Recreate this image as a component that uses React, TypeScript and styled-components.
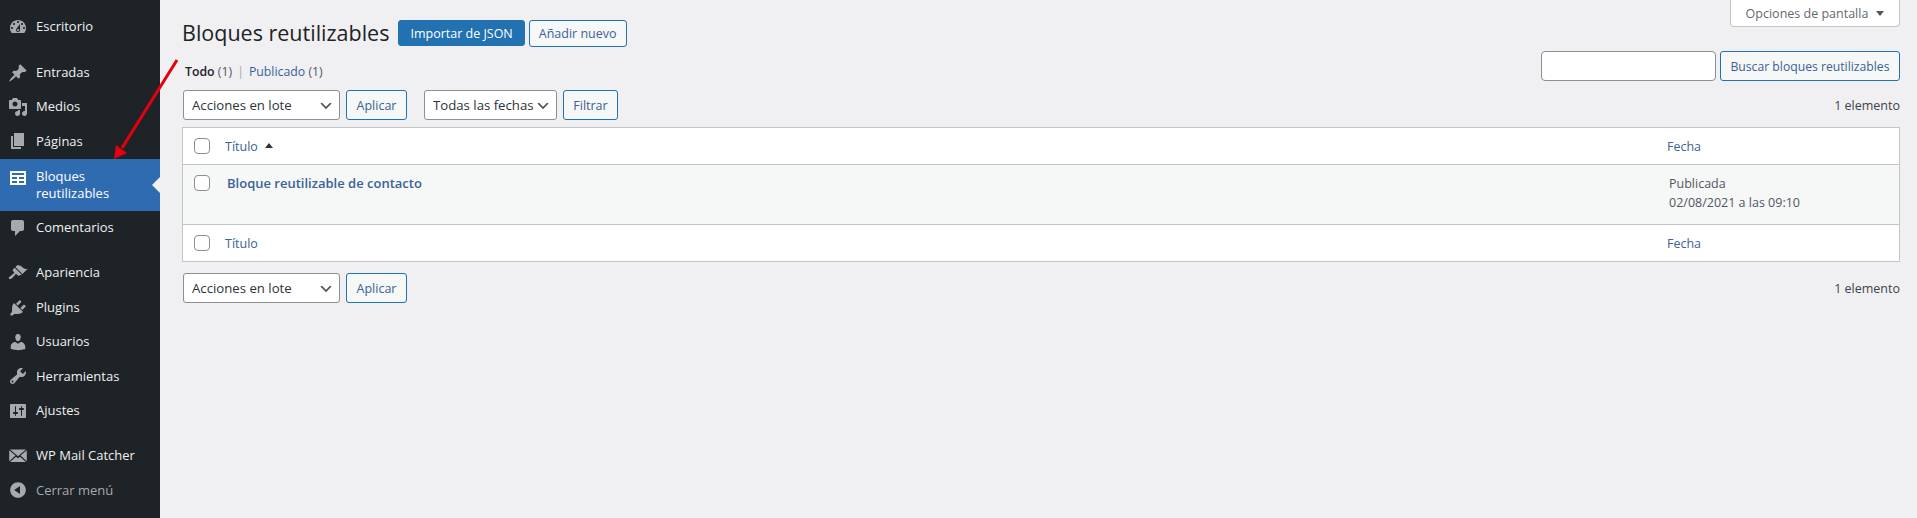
import React, { FC } from "react";
import styled, { createGlobalStyle } from "styled-components";

const GlobalStyle = createGlobalStyle`
  html, body {
    margin: 0;
    padding: 0;
    height: 100%;
    background: #f0f0f2;
    font-family: "Open Sans", "Noto Sans", sans-serif;
    font-size: 12.5px;
    color: #3c434a;
  }
  #root {
    height: 100%;
  }
`;

const LINK = "#3a6298";

const Shell = styled.div`
  position: relative;
  display: flex;
  width: 100%;
  height: 518px;
  overflow: hidden;
`;

const Sidebar = styled.nav`
  flex: 0 0 160px;
  background: #1d2327;
  padding-top: 10px;
  box-sizing: border-box;
`;

const MenuGroup = styled.ul`
  list-style: none;
  margin: 0 0 11px;
  padding: 0;
`;

const MenuItem = styled.li<{ $active?: boolean; $muted?: boolean }>`
  position: relative;
  display: flex;
  align-items: ${(p) => (p.$active ? "flex-start" : "center")};
  min-height: 34.4px;
  box-sizing: border-box;
  padding: ${(p) => (p.$active ? "9px 4px 8px 0" : "0 4px 0 0")};
  background: ${(p) => (p.$active ? "#2f6bb0" : "transparent")};
  color: ${(p) => (p.$active ? "#fff" : p.$muted ? "#a7aaad" : "#f0f0f1")};
  font-size: 13px;
  line-height: 17.5px;

  ${(p) =>
    p.$active &&
    `
    &::after {
      content: "";
      position: absolute;
      right: 0;
      top: 18px;
      border: 8px solid transparent;
      border-left-width: 0;
      border-right-color: #f0f0f2;
    }
  `}
`;

const MenuIcon = styled.svg<{ $active?: boolean }>`
  flex: 0 0 20px;
  width: 20px;
  height: 20px;
  margin: 0 8px 0 8px;
  fill: ${(p) => (p.$active ? "#fff" : "#a7aaad")};
`;

const Main = styled.main`
  flex: 1;
  min-width: 0;
  padding: 0 17px 0 22px;
`;

const HeadRow = styled.div`
  display: flex;
  justify-content: space-between;
  align-items: flex-start;
  height: 46px;
`;

const HeadLeft = styled.div`
  display: flex;
  align-items: center;
  padding-top: 19px;
`;

const Heading = styled.h1`
  margin: 0 9px 0 0;
  font-size: 21.5px;
  font-weight: 400;
  line-height: 28px;
  color: #1d2327;
`;

const Button = styled.button<{ $primary?: boolean }>`
  height: ${(p) => (p.$primary ? "26px" : "27px")};
  padding: 0 ${(p) => (p.$primary ? "11px" : "9px")};
  margin-right: 4px;
  border: 1px solid #2271b1;
  border-radius: 3px;
  background: ${(p) => (p.$primary ? "#2271b1" : "#f6f7f7")};
  color: ${(p) => (p.$primary ? "#fff" : LINK)};
  font: inherit;
  font-size: 12.5px;
  white-space: nowrap;
  cursor: pointer;
`;

const ScreenTab = styled.button`
  display: flex;
  align-items: center;
  justify-content: center;
  gap: 8px;
  width: 170px;
  height: 27px;
  border: 1px solid #c3c4c7;
  border-top: 0;
  border-radius: 0 0 4px 4px;
  background: #fff;
  color: #646970;
  font: inherit;
  font-size: 12.5px;
  padding: 0;
`;

const DownCaret = styled.span`
  width: 0;
  height: 0;
  border: 4px solid transparent;
  border-top: 5px solid #50575e;
  border-bottom: 0;
`;

const ViewsRow = styled.div`
  display: flex;
  justify-content: space-between;
  align-items: flex-start;
  height: 44px;
`;

const Views = styled.div`
  padding-top: 17px;
  line-height: 18px;
  margin-left: 3px;
  color: #646970;
  font-size: 12.3px;
`;

const Current = styled.strong`
  color: #1d2327;
  font-weight: 600;
`;

const Count = styled.span`
  color: #50575e;
`;

const ViewLink = styled.a`
  color: ${LINK};
  text-decoration: none;
`;

const Separator = styled.span`
  margin: 0 5px;
  color: #a7aaad;
`;

const SearchBox = styled.form`
  display: flex;
  gap: 4px;
  margin: 5px 0 0;
`;

const SearchInput = styled.input`
  width: 175px;
  height: 30px;
  box-sizing: border-box;
  border: 1px solid #8c8f94;
  border-radius: 4px;
  background: #fff;
  padding: 0 8px;
`;

const ToolButton = styled.button<{ $width: number }>`
  width: ${(p) => p.$width}px;
  height: 30px;
  box-sizing: border-box;
  padding: 0;
  border: 1px solid #2271b1;
  border-radius: 3px;
  background: #f6f7f7;
  color: ${LINK};
  font: inherit;
  font-size: 12.5px;
  white-space: nowrap;
`;

const SearchButton = styled(ToolButton)`
  font-size: 12.2px;
`;

const TableNav = styled.div<{ $bottom?: boolean }>`
  display: flex;
  align-items: center;
  height: 30px;
  margin: ${(p) => (p.$bottom ? "11px 0 0" : "0 0 7px")};
`;

const Select = styled.select<{ $width: number; $left?: number }>`
  appearance: none;
  width: ${(p) => p.$width}px;
  height: 30px;
  box-sizing: border-box;
  margin: 0 6px 0 ${(p) => p.$left ?? 1}px;
  padding: 0 20px 0 8px;
  border: 1px solid #8c8f94;
  border-radius: 3px;
  background: #fff
    url("data:image/svg+xml;charset=US-ASCII,%3Csvg%20width%3D%2220%22%20height%3D%2220%22%20xmlns%3D%22http%3A%2F%2Fwww.w3.org%2F2000%2Fsvg%22%3E%3Cpath%20d%3D%22M5%206l5%205%205-5%202%201-7%207-7-7%202-1z%22%20fill%3D%22%23555%22%2F%3E%3C%2Fsvg%3E")
    no-repeat right 5px top 55%;
  background-size: 16px 16px;
  color: #2c3338;
  font: inherit;
  font-size: 13.2px;
`;

const ItemCount = styled.span`
  margin-left: auto;
  color: #3c434a;
  font-size: 12.5px;
`;

const Table = styled.table`
  width: 100%;
  border: 1px solid #c3c4c7;
  border-collapse: separate;
  border-spacing: 0;
  background: #fff;
  table-layout: fixed;
  box-sizing: border-box;
`;

const Check = styled.input.attrs({ type: "checkbox" })`
  appearance: none;
  display: block;
  width: 16px;
  height: 16px;
  margin: 0;
  border: 1px solid #8c8f94;
  border-radius: 4px;
  background: #fff;
`;

const HeadCell = styled.td<{ $width?: number; $line?: "top" | "bottom"; $check?: boolean }>`
  height: 37px;
  padding: 0 0 0 ${(p) => (p.$check ? "11px" : p.$width ? "10px" : "0")};
  width: ${(p) => (p.$check ? "42px" : p.$width ? `${p.$width}px` : "auto")};
  box-sizing: border-box;
  color: ${LINK};
  font-size: 12.5px;
  ${(p) => p.$line === "bottom" && "border-bottom: 1px solid #c3c4c7;"}
  ${(p) => p.$line === "top" && "border-top: 1px solid #c3c4c7;"}
`;

const SortCaret = styled.span`
  display: inline-block;
  width: 0;
  height: 0;
  margin-left: 7px;
  vertical-align: 3px;
  border: 4px solid transparent;
  border-bottom: 5px solid #2c3338;
  border-top: 0;
`;

const Row = styled.tr`
  background: #f6f7f7;
`;

const RowCheckCell = styled.td`
  padding: 10px 0 0 11px;
  box-sizing: border-box;
  vertical-align: top;
`;

const RowCell = styled.td`
  height: 59px;
  padding: 9px 0 0 2px;
  box-sizing: border-box;
  vertical-align: top;
  line-height: 19px;
`;

const RowTitle = styled.a`
  color: ${LINK};
  font-weight: 600;
  font-size: 13px;
  text-decoration: none;
`;

const DateCell = styled.td`
  padding: 9px 0 0 12px;
  box-sizing: border-box;
  vertical-align: top;
  color: #50575e;
  font-size: 12.5px;
  line-height: 19px;
`;

const Annotation = styled.svg`
  position: absolute;
  left: 110px;
  top: 55px;
  width: 72px;
  height: 110px;
  pointer-events: none;
`;

type NavEntry = { label: React.ReactNode; path: string; active?: boolean; muted?: boolean };

const ICONS = {
  dashboard:
    "M3.76 16h12.48c1.1-1.37 1.76-3.11 1.76-5 0-4.42-3.58-8-8-8s-8 3.58-8 8c0 1.89.66 3.63 1.76 5zM10 4c.55 0 1 .45 1 1s-.45 1-1 1-1-.45-1-1 .45-1 1-1zM6 6c.55 0 1 .45 1 1s-.45 1-1 1-1-.45-1-1 .45-1 1-1zm8 0c.55 0 1 .45 1 1s-.45 1-1 1-1-.45-1-1 .45-1 1-1zm-5.37 5.55L12 7v6c0 1.1-.9 2-2 2s-2-.9-2-2c0-.57.24-1.08.63-1.45zM4 10c.55 0 1 .45 1 1s-.45 1-1 1-1-.45-1-1 .45-1 1-1zm12 0c.55 0 1 .45 1 1s-.45 1-1 1-1-.45-1-1 .45-1 1-1zm-5 3c0-.55-.45-1-1-1s-1 .45-1 1 .45 1 1 1 1-.45 1-1z",
  post: "M10.44 3.02l1.82-1.82 6.36 6.35-1.83 1.82c-1.05-.68-2.48-.57-3.41.36l-.75.75c-.92.93-1.04 2.35-.35 3.41l-1.83 1.82-2.41-2.41-2.8 2.79c-.42.42-3.38 2.71-3.8 2.29s1.86-3.39 2.28-3.81l2.79-2.79L4.1 9.36l1.83-1.82c1.05.69 2.48.57 3.4-.36l.75-.75c.93-.92 1.05-2.35.36-3.41z",
  media:
    "M13 11V4c0-.55-.45-1-1-1h-1.67L9 1H5L3.67 3H2c-.55 0-1 .45-1 1v7c0 .55.45 1 1 1h10c.55 0 1-.45 1-1zM7 4.5c1.38 0 2.5 1.12 2.5 2.5S8.38 9.5 7 9.5 4.5 8.38 4.5 7 5.62 4.5 7 4.5zM14 6h5v10.5c0 1.38-1.12 2.5-2.5 2.5S14 17.88 14 16.5s1.12-2.5 2.5-2.5c.17 0 .34.02.5.05V9h-3V6zm-4 8.05V13h2v3.5c0 1.38-1.12 2.5-2.5 2.5S7 17.88 7 16.5 8.12 14 9.5 14c.17 0 .34.02.5.05z",
  page: "M6 15V2h10v13H6zm-1 1h8v2H3V5h2v11z",
  table:
    "M18 17V3H2v14h16zM16 7H4V5h12v2zM9 11H4V9h5v2zm7 0h-5V9h5v2zM9 15H4v-2h5v2zm7 0h-5v-2h5v2z",
  comments:
    "M5 2h9c1.1 0 2 .9 2 2v7c0 1.1-.9 2-2 2h-2l-5 5v-5H5c-1.1 0-2-.9-2-2V4c0-1.1.9-2 2-2z",
  appearance:
    "M14.48 11.06L7.41 3.99l1.5-1.5c.5-.56 2.3-.47 3.51.32 1.21.8 1.43 1.28 2.91 2.1 1.18.64 2.45 1.26 4.45.85zm-.71.71L6.7 4.7 4.93 6.47c-.39.39-.39 1.02 0 1.41l1.06 1.06c.39.39.39 1.03 0 1.42-.6.6-1.43 1.11-2.21 1.69-.35.26-.7.53-1.01.84C1.43 13.23.4 14.91.9 15.72c.5.8 2.5.3 3.9-1.1.31-.31.58-.66.84-1.01.58-.78 1.09-1.61 1.69-2.21.39-.39 1.03-.39 1.42 0l1.06 1.06c.39.39 1.02.39 1.41 0z",
  plugins:
    "M13.11 4.36L9.87 7.6 8 5.73l3.24-3.24c.35-.34 1.05-.2 1.56.32.52.51.66 1.21.31 1.55zm-8 1.77l.91-1.12 9.01 9.01-1.19.84c-.71.71-2.63 1.16-3.82 1.16H6.14L4.9 17.26c-.59.59-1.54.59-2.12 0-.59-.58-.59-1.53 0-2.12l1.24-1.24v-3.88c0-1.13.4-3.19 1.09-3.89zm7.26 3.97l3.24-3.24c.34-.35 1.04-.21 1.55.31.52.51.66 1.21.31 1.55l-3.24 3.25z",
  users:
    "M10 9.25c-2.27 0-2.73-3.44-2.73-3.44C7 4.02 7.82 2 9.97 2c2.16 0 2.98 2.02 2.71 3.81 0 0-.41 3.44-2.68 3.44zm0 2.57L12.72 10c2.39 0 4.52 2.33 4.52 4.53v2.49s-3.65 1.13-7.24 1.13c-3.65 0-7.24-1.13-7.24-1.13v-2.49c0-2.25 1.94-4.48 4.47-4.48z",
  tools:
    "M16.68 9.77c-1.34 1.34-3.3 1.67-4.95.99l-5.41 6.52c-.99.99-2.59.99-3.58 0s-.99-2.59 0-3.57l6.52-5.42c-.68-1.65-.35-3.61.99-4.95 1.28-1.28 3.12-1.62 4.72-1.06l-2.89 2.89 2.82 2.82 2.86-2.87c.53 1.58.18 3.39-1.08 4.65zM3.81 16.21c.4.39 1.04.39 1.43 0 .4-.4.4-1.04 0-1.43-.39-.4-1.03-.4-1.43 0-.39.39-.39 1.03 0 1.43z",
  settings:
    "M18 16V4c0-.55-.45-1-1-1H3c-.55 0-1 .45-1 1v12c0 .55.45 1 1 1h14c.55 0 1-.45 1-1zM8 11h1c.55 0 1 .45 1 1s-.45 1-1 1H8v1.5c0 .28-.22.5-.5.5s-.5-.22-.5-.5V13H6c-.55 0-1-.45-1-1s.45-1 1-1h1V5.5c0-.28.22-.5.5-.5s.5.22.5.5V11zm5-2h-1c-.55 0-1-.45-1-1s.45-1 1-1h1V5.5c0-.28.22-.5.5-.5s.5.22.5.5V7h1c.55 0 1 .45 1 1s-.45 1-1 1h-1v5.5c0 .28-.22.5-.5.5s-.5-.22-.5-.5V9z",
  // envelope: four solid flaps with hairline gaps between them
  mail: "M2 3.5h16L10 10.2zM1.2 4.2v11l6.3-5.6zM18.8 4.2v11l-6.3-5.6zM2 16l6-5.3 2 1.6 2-1.6 6 5.3z",
  collapse:
    "M10 2.16c4.33 0 7.84 3.51 7.84 7.84s-3.51 7.84-7.84 7.84S2.16 14.33 2.16 10 5.71 2.16 10 2.16zm2 11.72V6.12L6.18 9.97z",
};

const GROUPS: NavEntry[][] = [
  [{ label: "Escritorio", path: ICONS.dashboard }],
  [
    { label: "Entradas", path: ICONS.post },
    { label: "Medios", path: ICONS.media },
    { label: "Páginas", path: ICONS.page },
    {
      label: (
        <>
          Bloques
          <br />
          reutilizables
        </>
      ),
      path: ICONS.table,
      active: true,
    },
    { label: "Comentarios", path: ICONS.comments },
  ],
  [
    { label: "Apariencia", path: ICONS.appearance },
    { label: "Plugins", path: ICONS.plugins },
    { label: "Usuarios", path: ICONS.users },
    { label: "Herramientas", path: ICONS.tools },
    { label: "Ajustes", path: ICONS.settings },
  ],
  [
    { label: "WP Mail Catcher", path: ICONS.mail },
    { label: "Cerrar menú", path: ICONS.collapse, muted: true },
  ],
];

const BulkActions: FC = () => (
  <>
    <Select $width={157}>
      <option>Acciones en lote</option>
    </Select>
    <ToolButton $width={61} type="button">
      Aplicar
    </ToolButton>
  </>
);

const TitleRow: FC<{ line: "top" | "bottom"; caret?: boolean }> = ({ line, caret }) => (
  <tr>
    <HeadCell $check $line={line}>
      <Check />
    </HeadCell>
    <HeadCell $line={line}>
      Título
      {caret && <SortCaret />}
    </HeadCell>
    <HeadCell $line={line} $width={242}>
      Fecha
    </HeadCell>
  </tr>
);

export default function App() {
  return (
    <>
      <GlobalStyle />
      <Shell>
        <Sidebar>
          {GROUPS.map((group, i) => (
            <MenuGroup key={i}>
              {group.map((item, j) => (
                <MenuItem key={j} $active={item.active} $muted={item.muted}>
                  <MenuIcon viewBox="0 0 20 20" $active={item.active}>
                    <path fillRule="evenodd" d={item.path} />
                  </MenuIcon>
                  <span>{item.label}</span>
                </MenuItem>
              ))}
            </MenuGroup>
          ))}
        </Sidebar>
        <Main>
          <HeadRow>
            <HeadLeft>
              <Heading>Bloques reutilizables</Heading>
              <Button $primary type="button">
                Importar de JSON
              </Button>
              <Button type="button">Añadir nuevo</Button>
            </HeadLeft>
            <ScreenTab type="button">
              Opciones de pantalla
              <DownCaret />
            </ScreenTab>
          </HeadRow>
          <ViewsRow>
            <Views>
              <Current>Todo</Current> <Count>(1)</Count>
              <Separator>|</Separator>
              <ViewLink href="#">Publicado</ViewLink> <Count>(1)</Count>
            </Views>
            <SearchBox>
              <SearchInput />
              <SearchButton $width={180} type="button">
                Buscar bloques reutilizables
              </SearchButton>
            </SearchBox>
          </ViewsRow>
          <TableNav>
            <BulkActions />
            <Select $width={133} $left={17}>
              <option>Todas las fechas</option>
            </Select>
            <ToolButton $width={55} type="button">
              Filtrar
            </ToolButton>
            <ItemCount>1 elemento</ItemCount>
          </TableNav>
          <Table>
            <thead>
              <TitleRow line="bottom" caret />
            </thead>
            <tbody>
              <Row>
                <RowCheckCell>
                  <Check />
                </RowCheckCell>
                <RowCell>
                  <RowTitle href="#">Bloque reutilizable de contacto</RowTitle>
                </RowCell>
                <DateCell>
                  Publicada
                  <br />
                  02/08/2021 a las 09:10
                </DateCell>
              </Row>
            </tbody>
            <tfoot>
              <TitleRow line="top" />
            </tfoot>
          </Table>
          <TableNav $bottom>
            <BulkActions />
            <ItemCount>1 elemento</ItemCount>
          </TableNav>
        </Main>
        <Annotation viewBox="0 0 72 110">
          <line x1="67" y1="5" x2="12" y2="93" stroke="#e6000f" strokeWidth="3" />
          <polygon points="4,104 6,90 17,98" fill="#e6000f" />
        </Annotation>
      </Shell>
    </>
  );
}
